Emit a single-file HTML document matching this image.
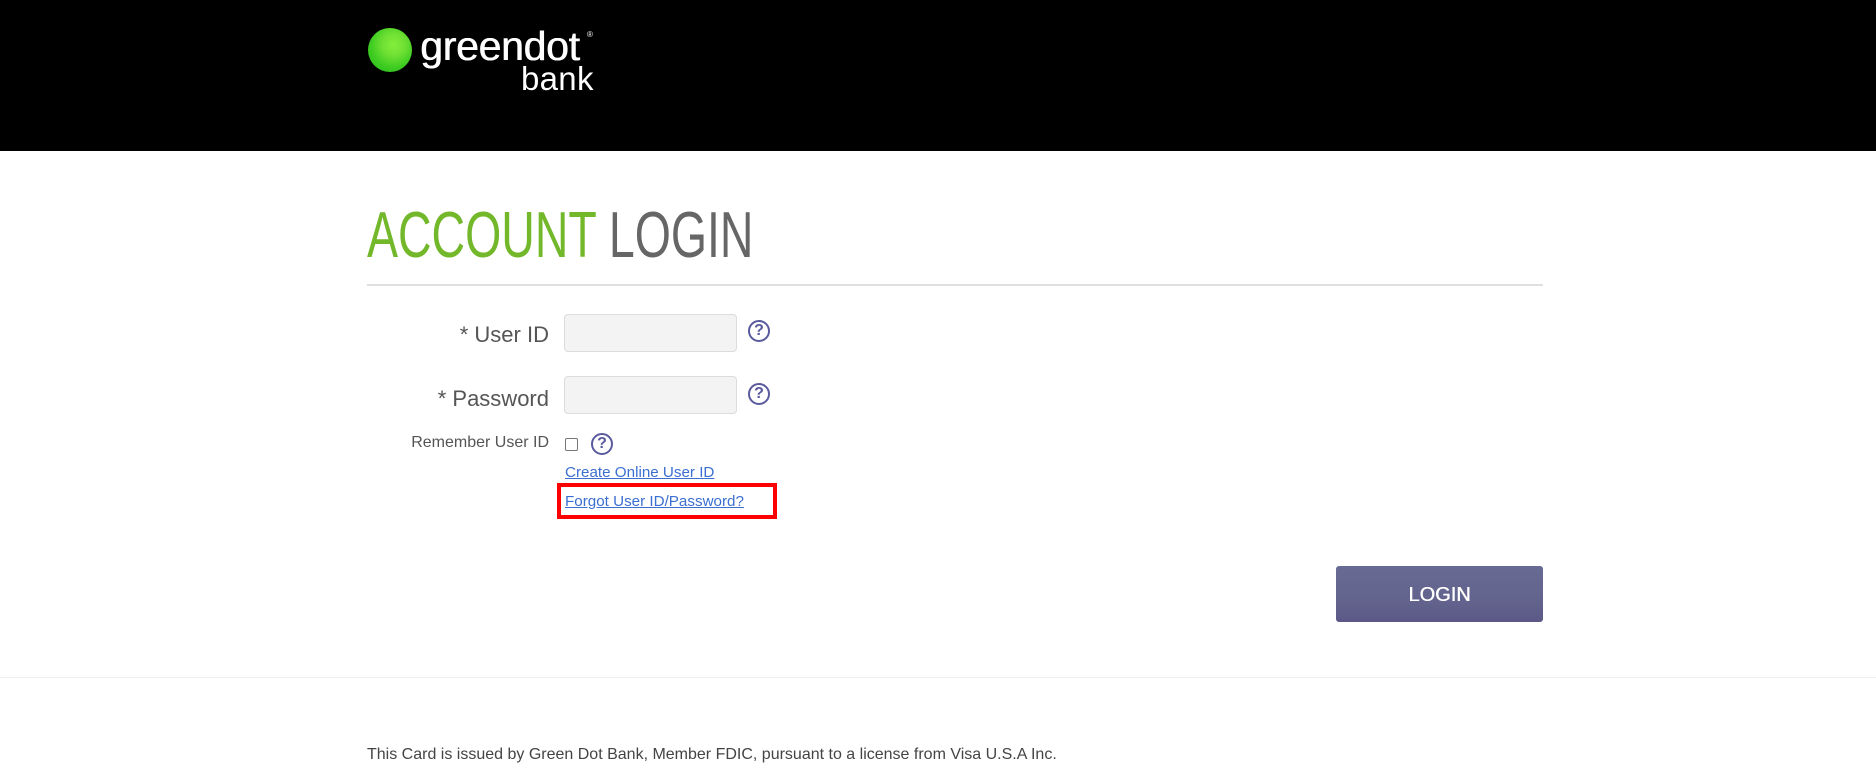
<!DOCTYPE html>
<html><head><meta charset="utf-8"><style>
*{margin:0;padding:0;box-sizing:border-box}
body{width:1876px;height:773px;background:#fff;position:relative;overflow:hidden;font-family:"Liberation Sans",Arial,sans-serif}
.abs{position:absolute}
.hdr{left:0;top:0;width:1876px;height:151px;background:#000}
.ball{left:368px;top:28px;width:44px;height:44px;border-radius:50%;background:radial-gradient(circle at 58% 38%,#84ee3c 0,#6fe033 30%,#3fcc22 60%,#1fb818 100%)}
.gd{left:420px;top:22px;color:#fff;font-size:41px;font-weight:normal;letter-spacing:-0.3px;line-height:48px;text-shadow:0.6px 0 0 #fff}
.reg{left:587px;top:30px;color:#fff;font-size:8px}
.bank{left:521px;top:60px;color:#fff;font-size:33px;line-height:38px;font-weight:normal;letter-spacing:0.3px}
.h1{left:367px;top:197px;font-size:65px;line-height:75px;white-space:nowrap;transform:scaleX(0.715);transform-origin:0 0}
.line{left:367px;top:284px;width:1176px;height:2px;background:#e0e0e0}
.lbl{color:#555;font-size:22px;text-align:right;width:300px;left:249px;white-space:nowrap}
.inp{left:564px;width:173px;height:38px;background:#f3f3f3;border:1px solid #dcdcdc;border-radius:4px}
.q{width:22px;height:22px;border:2px solid #5a5a9e;border-radius:50%;color:#5a5a9e;font-weight:bold;font-size:16px;line-height:18px;text-align:center}
.cb{left:565px;top:438px;width:13px;height:13px;border:1px solid #777;border-radius:2px;background:#fff}
.lnk{left:565px;color:#3b6fd1;font-size:15.2px;text-decoration:underline;white-space:nowrap}
.red{left:557px;top:483px;width:220px;height:36px;border:4px solid #ff0000}
.btn{left:1336px;top:566px;width:207px;height:56px;border-radius:3px;background:linear-gradient(#676a92,#63648e 60%,#5b5887);color:#fff;font-size:20px;text-align:center;line-height:58px;text-shadow:0.4px 0 0 #fff}
.fline{left:0;top:677px;width:1876px;height:1px;background:#eee}
.ft{left:367px;top:746px;font-size:16px;color:#444;white-space:nowrap}
</style></head><body>
<div class="abs hdr"></div>
<div class="abs ball"></div>
<div class="abs gd">greendot</div>
<div class="abs reg">®</div>
<div class="abs bank">bank</div>
<div class="abs h1"><span style="color:#73b72a">ACCOUNT</span> <span style="color:#666">LOGIN</span></div>
<div class="abs line"></div>
<div class="abs lbl" style="top:322px">* User ID</div>
<div class="abs inp" style="top:314px"></div>
<div class="abs q" style="left:748px;top:320px">?</div>
<div class="abs lbl" style="top:386px">* Password</div>
<div class="abs inp" style="top:376px"></div>
<div class="abs q" style="left:748px;top:383px">?</div>
<div class="abs lbl" style="top:434px;font-size:16px">Remember User ID</div>
<div class="abs cb"></div>
<div class="abs q" style="left:591px;top:433px">?</div>
<div class="abs lnk" style="top:464px">Create Online User ID</div>
<div class="abs lnk" style="top:493px">Forgot User ID/Password?</div>
<div class="abs red"></div>
<div class="abs btn">LOGIN</div>
<div class="abs fline"></div>
<div class="abs ft">This Card is issued by Green Dot Bank, Member FDIC, pursuant to a license from Visa U.S.A Inc.</div>
</body></html>
